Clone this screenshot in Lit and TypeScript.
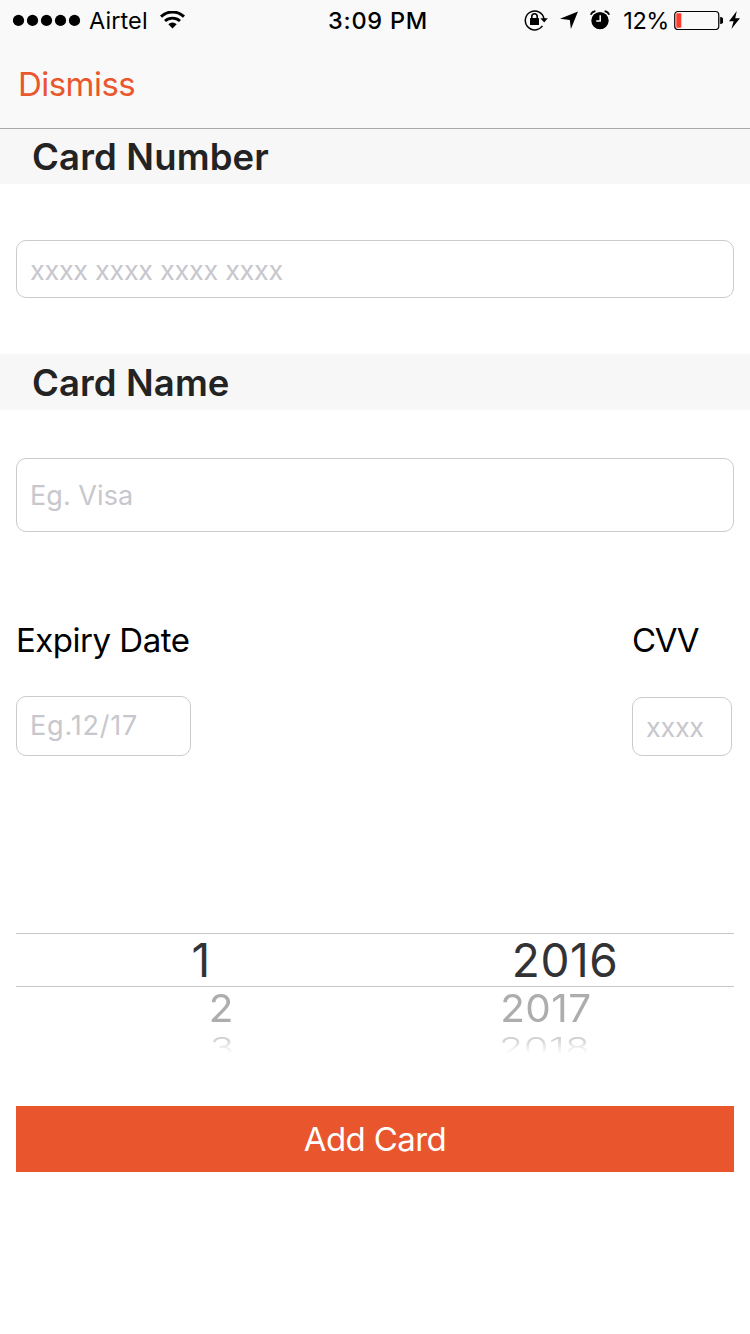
import { LitElement, html, css, svg } from "lit";
import { customElement, property } from "lit/decorators.js";

@customElement("status-bar")
class StatusBar extends LitElement {
  static styles = css`
    :host { display: flex; height: 40px; align-items: center; color: #000; font-size: 23.5px; line-height: 40px; }
    span { padding-top: 1px; }
    .side { display: flex; align-items: center; flex: 1 1 0; }
    .right { justify-content: flex-end; }
    .carrier { letter-spacing: 0.1px; margin: 0 12px 0 8px; }
    .time { font-weight: 500; letter-spacing: 0.75px; padding-left: 6px; }
    .percent { letter-spacing: -0.4px; margin-right: 5px; }
    svg { display: block; flex: none; }
    .dots { margin-left: 13px; }
    .lock { margin-right: 12px; }
    .arrow { margin-right: 12px; }
    .alarm { margin-right: 13px; }
    .battery { margin-right: 6px; }
    .bolt { margin-right: 10px; }
  `;

  render() {
    return html`
      <div class="side">
        <svg class="dots" width="68" height="12" viewBox="0 0 68 12">
          ${[0, 1, 2, 3, 4].map((i) => svg`<circle cx=${5.5 + i * 14} cy="6.4" r="5.6" />`)}
        </svg>
        <span class="carrier">Airtel</span>
        <svg class="wifi" width="25" height="18" viewBox="0 0 25 18">
          <path d="M1 5.6a16.6 16.6 0 0 1 23 0" fill="none" stroke="#000" stroke-width="2.9" />
          <path d="M5 10.1a11 11 0 0 1 15 0" fill="none" stroke="#000" stroke-width="2.8" />
          <path d="M8.3 13.3a6 6 0 0 1 8.4 0L12.5 17.6z" />
        </svg>
      </div>
      <span class="time">3:09 PM</span>
      <div class="side right">
        <svg class="lock" width="24" height="22" viewBox="0 0 24 22">
          <path d="M18.4 16.9A9.4 9.4 0 1 1 20 10" fill="none" stroke="#000" stroke-width="1.5" />
          <path d="M16.3 9.2h7.5l-3.6 4.4z" />
          <rect x="6" y="9" width="9" height="7" rx=".6" />
          <path d="M7.8 9V7.4a2.7 2.7 0 0 1 5.4 0V9" fill="none" stroke="#000" stroke-width="1.6" />
        </svg>
        <svg class="arrow" width="18" height="18" viewBox="0 0 18 18">
          <path d="M18 .4L10.9 18 9.8 9 0 7.8z" />
        </svg>
        <svg class="alarm" width="20" height="20" viewBox="0 0 20 20">
          <circle cx="10" cy="10.6" r="8.7" />
          <path d="M.8 4.7Q2 1.7 5.4 1.1M19.2 4.7Q18 1.7 14.6 1.1" fill="none" stroke="#000" stroke-width="1.7" />
          <path d="M10.2 5.2v5.8H6.2" fill="none" stroke="#f9f9f9" stroke-width="1.5" />
        </svg>
        <span class="percent">12%</span>
        <svg class="battery" width="49" height="20" viewBox="0 0 49 20">
          <rect x=".75" y="1.5" width="44" height="18" rx="3.2" fill="none" stroke="#000" stroke-width="1.2" />
          <rect x="2.3" y="3.3" width="5" height="14.4" rx=".8" fill="#ff3b30" />
          <path d="M46.3 7.3a3.2 3.2 0 0 1 0 6.4z" stroke="#000" stroke-width=".6" />
        </svg>
        <svg class="bolt" width="11" height="18" viewBox="0 0 11 18">
          <path d="M7.8 0L0 10.2h4.6L2.4 18 11 7.3H6.2z" />
        </svg>
      </div>
    `;
  }
}

@customElement("picker-column")
class PickerColumn extends LitElement {
  @property({ type: Array }) values: string[] = [];

  static styles = css`
    :host { display: grid; grid-template-rows: 52px 43px 24px; color: #333336; font-size: 46px; }
    .row { display: flex; align-items: center; justify-content: center; white-space: nowrap; line-height: 1; letter-spacing: 0.5px; }
    .current { margin-left: var(--shift-0, 0px); }
    .next { color: #adadad; margin-left: var(--shift-1, 0px); }
    .next span { display: block; transform: scale(0.88, 0.84); }
    .last { align-items: flex-start; margin-left: var(--shift-2, 0px); color: #cecece; font-weight: 300; }
    .last span { display: block; transform-origin: 50% 0; transform: scale(0.87, 0.58); margin-top: 5px;
      -webkit-mask-image: linear-gradient(#000 15%, transparent 74%); mask-image: linear-gradient(#000 15%, transparent 74%); }
  `;

  render() {
    const kinds = ["current", "next", "last"];
    return this.values.map((v, i) => html`<div class="row ${kinds[i]}"><span>${v}</span></div>`);
  }
}

@customElement("app-root")
class AppRoot extends LitElement {
  static styles = css`
    * { box-sizing: border-box; }
    :host { display: flex; flex-direction: column; width: 750px; height: 1334px; background: #fff; color: #000;
      font-family: Inter, "Liberation Sans", sans-serif; overflow: hidden; }
    .top { background: #f9f9f9; border-bottom: 1px solid #a9a9ac; height: 129px; }
    .nav { height: 88px; padding: 0 18px; display: flex; align-items: center; }
    button { font: inherit; border: 0; padding: 0; background: none; }
    .dismiss { color: #ea572c; font-size: 33px; letter-spacing: -0.55px; }
    h2 { margin: 0; background: #f7f7f7; padding-left: 32px; font-size: 36.5px; font-weight: 600; color: #232323; }
    .h-number { height: 55px; line-height: 56px; letter-spacing: 0.15px; }
    .h-name { height: 56px; line-height: 58px; margin-top: 56px; letter-spacing: 0.1px; }
    input { display: block; font-family: inherit; font-size: 27px; border: 1px solid #cbcbcd; border-radius: 10px; background: #fff;
      padding: 0 13px; outline: none; color: #000; }
    input::placeholder { color: #c7c7cd; opacity: 1; }
    .number { margin: 56px 16px 0; height: 58px; padding-top: 2px; letter-spacing: -0.3px; }
    .name { margin: 48px 16px 0; height: 74px; letter-spacing: 0.05px; }
    .pair { display: flex; justify-content: space-between; padding: 0 18px 0 16px; margin-top: 84px; }
    .field { display: flex; flex-direction: column; }
    label { font-size: 33px; line-height: 48px; letter-spacing: -0.5px; white-space: nowrap; }
    .label-cvv { letter-spacing: -1.3px; }
    .date { width: 175px; height: 60px; margin-top: 32px; padding-bottom: 1px; letter-spacing: 0.8px; }
    .cvv { width: 100px; height: 59px; margin-top: 33px; padding-top: 1px; letter-spacing: -0.3px; }
    .wheel { margin: 177px 16px 0; height: 120px; display: grid; grid-template-columns: 1fr 1fr;
      background: linear-gradient(#c8c8c8, #c8c8c8) 0 0 / 100% 1px no-repeat, linear-gradient(#c8c8c8, #c8c8c8) 0 53px / 100% 1px no-repeat; padding-top: 1px; }
    .month { --shift-0: 11px; --shift-1: 51px; --shift-2: 54px; }
    .year { --shift-0: 21px; --shift-1: -17px; --shift-2: -21px; }
    .add { margin: 53px 16px 0; height: 66px; background: #e9562d; color: #fff; font-size: 33px; letter-spacing: -0.6px; }
  `;

  render() {
    return html`
      <header class="top">
        <status-bar></status-bar>
        <nav class="nav"><button class="dismiss">Dismiss</button></nav>
      </header>
      <h2 class="h-number">Card Number</h2>
      <input class="number" placeholder="xxxx xxxx xxxx xxxx" />
      <h2 class="h-name">Card Name</h2>
      <input class="name" placeholder="Eg. Visa" />
      <div class="pair">
        <div class="field"><label>Expiry Date</label><input class="date" placeholder="Eg.12/17" /></div>
        <div class="field"><label class="label-cvv">CVV</label><input class="cvv" placeholder="xxxx" /></div>
      </div>
      <div class="wheel">
        <picker-column class="month" .values=${["1", "2", "3"]}></picker-column>
        <picker-column class="year" .values=${["2016", "2017", "2018"]}></picker-column>
      </div>
      <button class="add">Add Card</button>
    `;
  }
}
